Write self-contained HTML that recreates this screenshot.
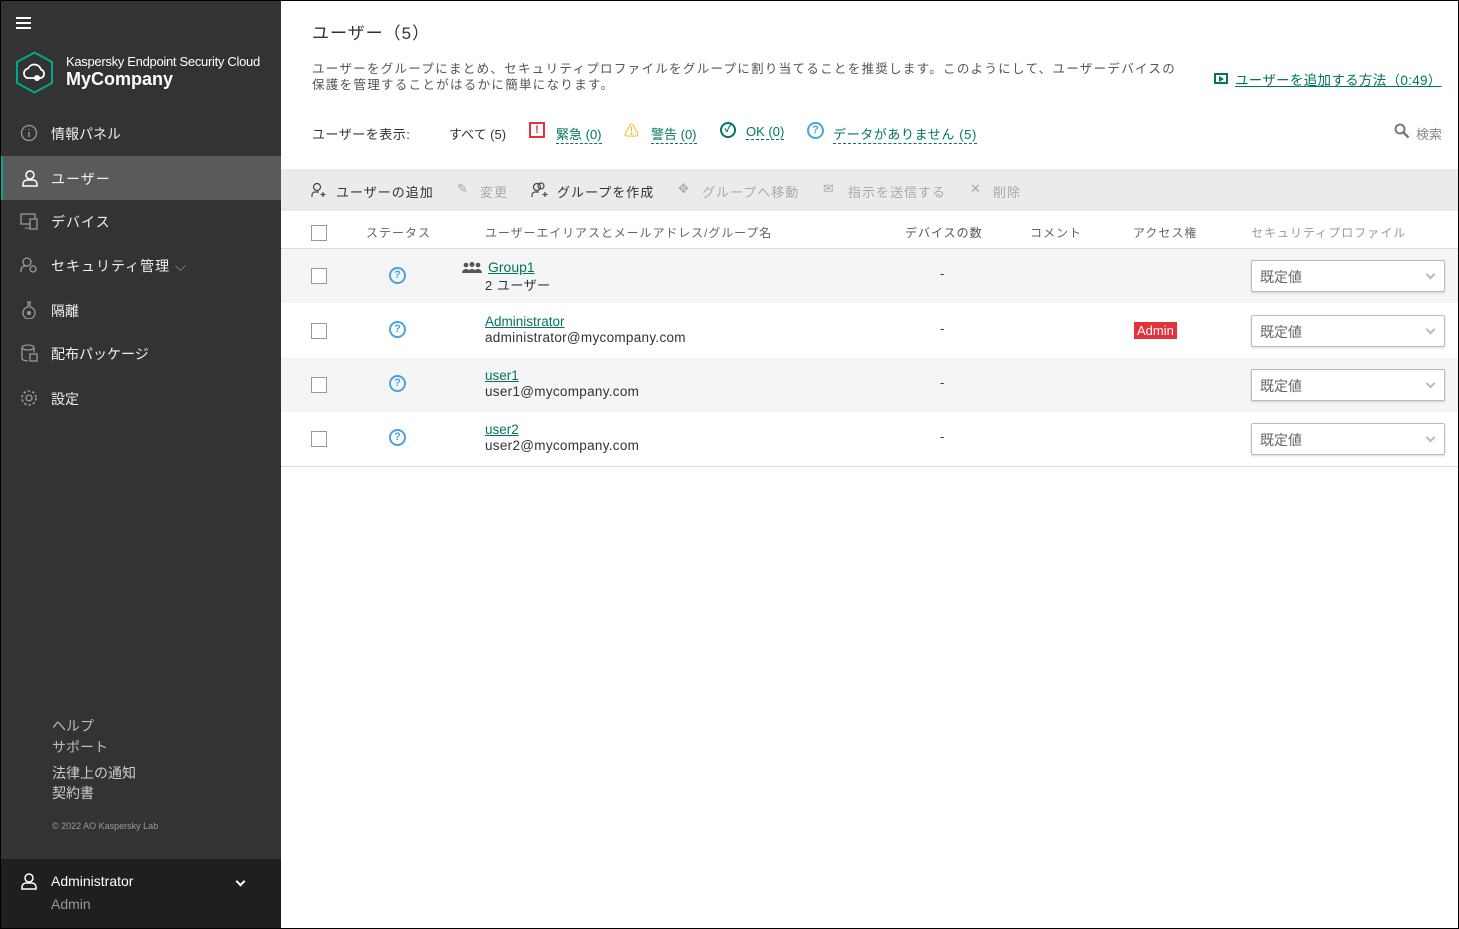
<!DOCTYPE html>
<html><head><meta charset="utf-8"><style>
*{box-sizing:border-box;margin:0;padding:0}
body{width:1459px;height:929px;overflow:hidden;font-family:"Liberation Sans","Noto Sans CJK JP",sans-serif;background:#fff;position:relative;color:#333}
.a{position:absolute;white-space:nowrap}
#frame{position:absolute;left:0;top:0;width:1459px;height:929px;border:1px solid #000;pointer-events:none;z-index:10}
#side{position:absolute;left:0;top:0;width:281px;height:929px;background:#333}
.nav{position:absolute;left:0;width:281px;height:44px;color:#eee;font-size:14px}
.nav span{position:absolute;left:51px;top:13px}
.nav svg{position:absolute;left:20px;top:13px}
.muted{color:#bbb;font-size:14px}
.lnk{color:#00755f;text-decoration:underline}
.dl{color:#00755f;border-bottom:1px dashed #00755f}
.tb{color:#333;font-size:13px;letter-spacing:1px}
.tbd{color:#aaa;font-size:13px;letter-spacing:1px}
.row{position:absolute;left:281px;width:1178px}
.cb{position:absolute;left:311px;width:16px;height:16px;border:1px solid #999;background:#fff}
.q{position:absolute;left:389px;width:17px;height:17px;border:2px solid #4aa3df;border-radius:50%;color:#4aa3df;font-size:11px;font-weight:bold;text-align:center;line-height:13px}
.dd{position:absolute;left:1251px;width:194px;height:32px;border:1px solid #bbb;border-radius:2px;background:#fff;box-shadow:0 1px 2px rgba(0,0,0,.15);font-size:14px;color:#666;padding:6px 8px}
.dd:after{content:"";position:absolute;right:10px;top:10px;width:5px;height:5px;border-right:2px solid #bbb;border-bottom:2px solid #bbb;transform:rotate(45deg)}
.th{font-size:12px;color:#666;letter-spacing:1px}
</style></head><body>
<div id="side">
 <div class="a" style="left:16px;top:17px;width:15px;height:2px;background:#fff;box-shadow:0 5px 0 #fff,0 10px 0 #fff"></div>
 <svg class="a" style="left:15px;top:51px" width="39" height="43" viewBox="0 0 39 43"><polygon points="19.5,1.5 37,11 37,32 19.5,41.5 2,32 2,11" fill="none" stroke="#00a88e" stroke-width="2"/><path d="M12 27a5 5 0 0 1 1-9.5 7 7 0 0 1 13 1 4.5 4.5 0 0 1 0 8.5z" fill="none" stroke="#fff" stroke-width="1.8"/><circle cx="22" cy="27" r="3" fill="#fff"/></svg>
 <div class="a" style="left:66px;top:54px;color:#fff;font-size:13px;letter-spacing:-.3px">Kaspersky Endpoint Security Cloud</div>
 <div class="a" style="left:66px;top:69px;color:#fff;font-size:18px;font-weight:bold">MyCompany</div>
 <div class="nav" style="top:111px"><svg width="18" height="18"><circle cx="9" cy="9" r="7.5" fill="none" stroke="#999" stroke-width="1.3"/><path d="M9 8v5M9 5v1" stroke="#999" stroke-width="1.4"/></svg><span>情報パネル</span></div>
 <div class="nav" style="top:156px;background:#5a5a5a;border-left:3px solid #00a88e"><svg width="18" height="18" style="left:18px"><circle cx="9" cy="6" r="4" fill="none" stroke="#fff" stroke-width="1.5"/><path d="M2 17v-2a4 4 0 0 1 4-4h6a4 4 0 0 1 4 4v2z" fill="none" stroke="#fff" stroke-width="1.5"/></svg><span style="left:48px;letter-spacing:1px">ユーザー</span></div>
 <div class="nav" style="top:199px"><svg width="18" height="18"><rect x="1" y="2" width="14" height="10" fill="none" stroke="#999" stroke-width="1.3"/><rect x="10" y="7" width="7" height="10" fill="#333" stroke="#999" stroke-width="1.3"/><path d="M5 16h5" stroke="#999"/></svg><span style="letter-spacing:1px">デバイス</span></div>
 <div class="nav" style="top:243px"><svg width="18" height="18"><circle cx="7" cy="6" r="4" fill="none" stroke="#999" stroke-width="1.3"/><path d="M1 16v-2a4 4 0 0 1 4-4h3" fill="none" stroke="#999" stroke-width="1.3"/><circle cx="13" cy="13" r="3" fill="none" stroke="#999" stroke-width="1.3"/></svg><span style="letter-spacing:1px">セキュリティ管理 <span style="position:static;color:#999">⌵</span></span></div>
 <div class="nav" style="top:288px"><svg width="18" height="18"><path d="M7 1h4M8 1v5a6 6 0 1 0 2 0V1" fill="none" stroke="#999" stroke-width="1.3"/><circle cx="9" cy="12" r="2" fill="#999"/></svg><span>隔離</span></div>
 <div class="nav" style="top:331px"><svg width="18" height="18"><ellipse cx="8" cy="3.5" rx="6" ry="2.5" fill="none" stroke="#999" stroke-width="1.3"/><path d="M2 3.5v11c0 1.5 3 2.5 6 2.5M14 3.5v5" fill="none" stroke="#999" stroke-width="1.3"/><rect x="10" y="10" width="7" height="7" fill="none" stroke="#999" stroke-width="1.3"/></svg><span>配布パッケージ</span></div>
 <div class="nav" style="top:376px"><svg width="18" height="18"><circle cx="9" cy="9" r="3" fill="none" stroke="#999" stroke-width="1.3"/><circle cx="9" cy="9" r="7" fill="none" stroke="#999" stroke-width="1.6" stroke-dasharray="2.5 2"/></svg><span>設定</span></div>
 <div class="a muted" style="left:52px;top:716px">ヘルプ</div>
 <div class="a muted" style="left:52px;top:737px">サポート</div>
 <div class="a muted" style="left:52px;top:763px;color:#ccc">法律上の通知</div>
 <div class="a muted" style="left:52px;top:783px;color:#ccc">契約書</div>
 <div class="a" style="left:52px;top:821px;color:#999;font-size:9px">© 2022 AO Kaspersky Lab</div>
 <div class="a" style="left:0;top:859px;width:281px;height:70px;background:#1f1f1f"></div>
 <svg class="a" style="left:20px;top:872px" width="18" height="18"><circle cx="9" cy="6" r="4" fill="none" stroke="#fff" stroke-width="1.5"/><path d="M2 17v-2a4 4 0 0 1 4-4h6a4 4 0 0 1 4 4v2z" fill="none" stroke="#fff" stroke-width="1.5"/></svg>
 <div class="a" style="left:51px;top:873px;color:#fff;font-size:14px">Administrator</div>
 <div class="a" style="left:51px;top:896px;color:#999;font-size:14px">Admin</div>
 <div class="a" style="left:237px;top:878px;width:7px;height:7px;border-right:2px solid #fff;border-bottom:2px solid #fff;transform:rotate(45deg)"></div>
</div>

<div class="a" style="left:312px;top:19px;font-size:17px;color:#333;letter-spacing:1px">ユーザー（5）</div>
<div class="a" style="left:312px;top:61px;font-size:12.5px;color:#555;line-height:16px;white-space:normal;width:876px;letter-spacing:1.3px">ユーザーをグループにまとめ、セキュリティプロファイルをグループに割り当てることを推奨します。このようにして、ユーザーデバイスの保護を管理することがはるかに簡単になります。</div>
<div class="a" style="left:1214px;top:73px;width:14px;height:11px;border:2px solid #00755f"></div>
<div class="a" style="left:1219px;top:76px;width:0;height:0;border-left:5px solid #00755f;border-top:3px solid transparent;border-bottom:3px solid transparent"></div>
<div class="a lnk" style="left:1235px;top:69px;font-size:13.5px;letter-spacing:.3px">ユーザーを追加する方法（0:49）</div>

<div class="a" style="left:312px;top:124px;font-size:13px;letter-spacing:.5px">ユーザーを表示:</div>
<div class="a" style="left:449px;top:124px;font-size:13px">すべて (5)</div>
<div class="a" style="left:529px;top:122px;width:16px;height:16px;border:2px solid #e2323c;color:#e2323c;font-size:11px;font-weight:bold;text-align:center;line-height:12px">!</div>
<div class="a dl" style="left:556px;top:124px;font-size:13px">緊急 (0)</div>
<div class="a" style="left:624px;top:120px;color:#f0b400;font-size:15px">⚠</div>
<div class="a dl" style="left:651px;top:124px;font-size:13px">警告 (0)</div>
<div class="a" style="left:720px;top:122px;width:16px;height:16px;border:2px solid #00755f;border-radius:50%;color:#00755f;font-size:10px;font-weight:bold;text-align:center;line-height:12px">✓</div>
<div class="a dl" style="left:746px;top:124px;font-size:13px">OK (0)</div>
<div class="q" style="left:807px;top:122px">?</div>
<div class="a dl" style="left:833px;top:124px;font-size:13px;letter-spacing:.6px">データがありません (5)</div>
<svg class="a" style="left:1394px;top:123px" width="16" height="16"><circle cx="6" cy="6" r="4.5" fill="none" stroke="#777" stroke-width="2"/><path d="M9.5 9.5l5 5" stroke="#777" stroke-width="2.5"/></svg>
<div class="a" style="left:1416px;top:124px;font-size:13px;color:#888">検索</div>

<div class="a" style="left:281px;top:169px;width:1178px;height:42px;background:#ebebeb"></div>
<svg class="a" style="left:311px;top:182px" width="16" height="16"><circle cx="6" cy="5" r="3.5" fill="none" stroke="#444" stroke-width="1.2"/><path d="M1 15v-2a3 3 0 0 1 3-3h4M12 10v5M9.5 12.5h5" fill="none" stroke="#444" stroke-width="1.2"/></svg>
<div class="a tb" style="left:336px;top:182px">ユーザーの追加</div>
<div class="a tbd" style="left:457px;top:181px">✎</div>
<div class="a tbd" style="left:480px;top:182px">変更</div>
<svg class="a" style="left:531px;top:182px" width="18" height="16"><circle cx="6" cy="5" r="3.5" fill="none" stroke="#444" stroke-width="1.2"/><circle cx="10" cy="4" r="3" fill="none" stroke="#444" stroke-width="1.2"/><path d="M1 15v-2a3 3 0 0 1 3-3h4M14 10v5M11.5 12.5h5" fill="none" stroke="#444" stroke-width="1.2"/></svg>
<div class="a tb" style="left:557px;top:182px">グループを作成</div>
<div class="a tbd" style="left:678px;top:181px">✥</div>
<div class="a tbd" style="left:702px;top:182px">グループへ移動</div>
<div class="a tbd" style="left:823px;top:181px">✉</div>
<div class="a tbd" style="left:848px;top:182px">指示を送信する</div>
<div class="a tbd" style="left:970px;top:181px">✕</div>
<div class="a tbd" style="left:993px;top:182px">削除</div>

<div class="cb" style="top:225px"></div>
<div class="a th" style="left:366px;top:224px">ステータス</div>
<div class="a th" style="left:485px;top:224px;letter-spacing:.9px">ユーザーエイリアスとメールアドレス/グループ名</div>
<div class="a th" style="left:905px;top:224px;color:#555">デバイスの数</div>
<div class="a th" style="left:1030px;top:224px">コメント</div>
<div class="a th" style="left:1133px;top:224px">アクセス権</div>
<div class="a th" style="left:1251px;top:224px;color:#999">セキュリティプロファイル</div>
<div class="a" style="left:281px;top:248px;width:1178px;height:1px;background:#d5dde3"></div>

<div class="row" style="top:249px;height:54px;background:#f5f5f5"></div>
<div class="row" style="top:358px;height:54px;background:#f5f5f5"></div>
<div class="a" style="left:281px;top:466px;width:1178px;height:1px;background:#d5dde3"></div>

<div class="cb" style="top:268px"></div><div class="q" style="top:267px">?</div>
<svg class="a" style="left:462px;top:262px" width="20" height="12"><circle cx="4" cy="3" r="2.3" fill="#555"/><circle cx="10" cy="2.5" r="2.5" fill="#555"/><circle cx="16" cy="3" r="2.3" fill="#555"/><path d="M0 11a4 4 0 0 1 8 0zM6 11a4 4 0 0 1 8 0zM12 11a4 4 0 0 1 8 0z" fill="#555"/></svg>
<div class="a lnk" style="left:488px;top:259px;font-size:14px">Group1</div>
<div class="a" style="left:485px;top:275px;font-size:13px;letter-spacing:.5px">2 ユーザー</div>
<div class="a" style="left:940px;top:266px;font-size:13px">-</div>
<div class="dd" style="top:260px">既定値</div>

<div class="cb" style="top:323px"></div><div class="q" style="top:321px">?</div>
<div class="a lnk" style="left:485px;top:314px;font-size:13.5px">Administrator</div>
<div class="a" style="left:485px;top:330px;font-size:13.5px;letter-spacing:.3px">administrator@mycompany.com</div>
<div class="a" style="left:940px;top:321px;font-size:13px">-</div>
<div class="a" style="left:1134px;top:322px;background:#e2323c;color:#fff;font-size:13px;padding:0 3px;line-height:17px">Admin</div>
<div class="dd" style="top:315px">既定値</div>

<div class="cb" style="top:377px"></div><div class="q" style="top:375px">?</div>
<div class="a lnk" style="left:485px;top:368px;font-size:13.5px">user1</div>
<div class="a" style="left:485px;top:384px;font-size:13.5px;letter-spacing:.3px">user1@mycompany.com</div>
<div class="a" style="left:940px;top:375px;font-size:13px">-</div>
<div class="dd" style="top:369px">既定値</div>

<div class="cb" style="top:431px"></div><div class="q" style="top:429px">?</div>
<div class="a lnk" style="left:485px;top:422px;font-size:13.5px">user2</div>
<div class="a" style="left:485px;top:438px;font-size:13.5px;letter-spacing:.3px">user2@mycompany.com</div>
<div class="a" style="left:940px;top:429px;font-size:13px">-</div>
<div class="dd" style="top:423px">既定値</div>

<div id="frame"></div>
</body></html>
